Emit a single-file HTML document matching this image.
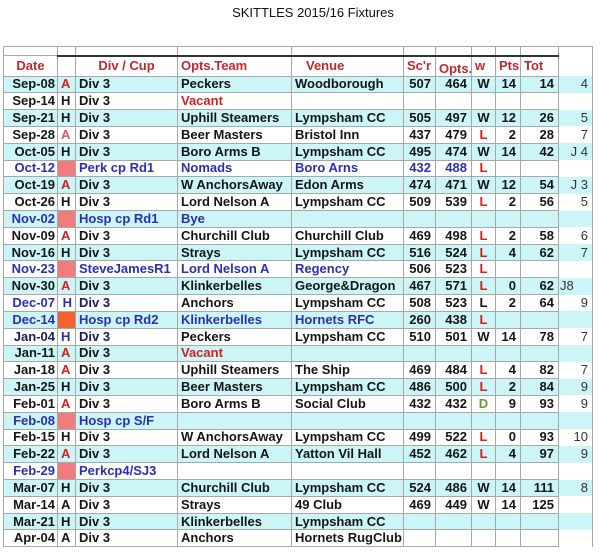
<!DOCTYPE html>
<html><head><meta charset="utf-8"><style>
html,body{margin:0;padding:0;background:#fff;width:600px;height:552px;overflow:hidden}
.t{position:absolute;left:0;top:5px;width:600px;text-align:center;font:13px "Liberation Sans",sans-serif;color:#111;padding-left:26px;box-sizing:border-box}
table{position:absolute;left:3px;top:46px;width:589px;border-collapse:collapse;table-layout:fixed;font:bold 13px "Liberation Sans",Arial,sans-serif;color:#151515}
td{border:1px solid #a8a8a8;padding:0 3px;line-height:14px;white-space:nowrap;overflow:hidden;box-sizing:border-box}
tr{height:16.82px}
tr.h{height:17px}
tr.h td{color:#c0282d;font-size:13px;border-top:2px solid #333}
tr.h td.e{border-top:none}
tr.z{height:9px}
tr.z td{border-bottom:none}
tr.c td{background:#ccf5f7}
td.e{border-left:none;border-top:none;border-bottom:none;border-right:1px solid #a8a8a8;font-weight:normal;text-align:right;color:#333;padding-right:4px}
td.d{text-align:right;padding-right:2px}
td.n{text-align:right;padding-right:4px}
td.w{text-align:center}
.r{color:#d62020}.b{color:#2a2fb5}.g{color:#6b9a3a}.p{color:#d95a6a}
td.pk{background:#f27c7c!important}td.or{background:#f4622f!important}
</style></head><body>
<div class="t">SKITTLES 2015/16 Fixtures</div>
<table>
<colgroup><col style="width:54px"><col style="width:18px"><col style="width:102px"><col style="width:114px"><col style="width:112px"><col style="width:32px"><col style="width:36px"><col style="width:24px"><col style="width:25px"><col style="width:38px"><col style="width:34px"></colgroup>
<tr class="z"><td style="border-bottom:1px solid #a8a8a8"></td><td></td><td></td><td></td><td></td><td></td><td></td><td></td><td></td><td></td><td class="e" style="border-top:1px solid #a8a8a8"></td></tr>
<tr class="h"><td style="border-top:1px solid #a8a8a8;text-align:center">Date</td><td></td><td style="text-align:center">Div / Cup</td><td>Opts.Team</td><td style="padding-left:14px">Venue</td><td>Sc'r</td><td style="padding-top:5px">Opts.</td><td>w</td><td>Pts.</td><td>Tot</td><td class="e"></td></tr>
<tr class="c"><td class="d">Sep-08</td><td class="r">A</td><td>Div 3</td><td>Peckers</td><td>Woodborough</td><td class="n">507</td><td class="n">464</td><td class="w">W</td><td class="n">14</td><td class="n">14</td><td class="e">4</td></tr>
<tr><td class="d">Sep-14</td><td>H</td><td>Div 3</td><td class="r">Vacant</td><td></td><td></td><td></td><td></td><td></td><td></td><td class="e"></td></tr>
<tr class="c"><td class="d">Sep-21</td><td>H</td><td>Div 3</td><td>Uphill Steamers</td><td>Lympsham CC</td><td class="n">505</td><td class="n">497</td><td class="w">W</td><td class="n">12</td><td class="n">26</td><td class="e">5</td></tr>
<tr><td class="d">Sep-28</td><td class="p">A</td><td>Div 3</td><td>Beer Masters</td><td>Bristol Inn</td><td class="n">437</td><td class="n">479</td><td class="w r">L</td><td class="n">2</td><td class="n">28</td><td class="e">7</td></tr>
<tr class="c"><td class="d">Oct-05</td><td>H</td><td>Div 3</td><td>Boro Arms B</td><td>Lympsham CC</td><td class="n">495</td><td class="n">474</td><td class="w">W</td><td class="n">14</td><td class="n">42</td><td class="e">J 4</td></tr>
<tr><td class="d b">Oct-12</td><td class="pk"></td><td class="b">Perk cp Rd1</td><td class="b">Nomads</td><td class="b">Boro Arns</td><td class="n b">432</td><td class="n b">488</td><td class="w r">L</td><td></td><td></td><td class="e"></td></tr>
<tr class="c"><td class="d">Oct-19</td><td class="r">A</td><td>Div 3</td><td>W AnchorsAway</td><td>Edon Arms</td><td class="n">474</td><td class="n">471</td><td class="w">W</td><td class="n">12</td><td class="n">54</td><td class="e">J 3</td></tr>
<tr><td class="d">Oct-26</td><td>H</td><td>Div 3</td><td>Lord Nelson A</td><td>Lympsham CC</td><td class="n">509</td><td class="n">539</td><td class="w r">L</td><td class="n">2</td><td class="n">56</td><td class="e">5</td></tr>
<tr class="c"><td class="d b">Nov-02</td><td class="pk"></td><td class="b">Hosp cp Rd1</td><td class="b">Bye</td><td></td><td></td><td></td><td></td><td></td><td></td><td class="e"></td></tr>
<tr><td class="d">Nov-09</td><td class="r">A</td><td>Div 3</td><td>Churchill Club</td><td>Churchill Club</td><td class="n">469</td><td class="n">498</td><td class="w r">L</td><td class="n">2</td><td class="n">58</td><td class="e">6</td></tr>
<tr class="c"><td class="d">Nov-16</td><td>H</td><td>Div 3</td><td>Strays</td><td>Lympsham CC</td><td class="n">516</td><td class="n">524</td><td class="w r">L</td><td class="n">4</td><td class="n">62</td><td class="e">7</td></tr>
<tr><td class="d b">Nov-23</td><td class="pk"></td><td class="b">SteveJamesR1</td><td class="b">Lord Nelson A</td><td class="b">Regency</td><td class="n">506</td><td class="n">523</td><td class="w r">L</td><td></td><td></td><td class="e"></td></tr>
<tr class="c"><td class="d">Nov-30</td><td class="r">A</td><td>Div 3</td><td>Klinkerbelles</td><td>George&amp;Dragon</td><td class="n">467</td><td class="n">571</td><td class="w r">L</td><td class="n">0</td><td class="n">62</td><td class="e" style="text-align:left;padding-left:1px">J8</td></tr>
<tr><td class="d b">Dec-07</td><td style="text-align:right" class="b">H</td><td style="color:#1a1a60">Div 3</td><td>Anchors</td><td>Lympsham CC</td><td class="n">508</td><td class="n">523</td><td class="w">L</td><td class="n">2</td><td class="n">64</td><td class="e">9</td></tr>
<tr class="c"><td class="d b">Dec-14</td><td class="or"></td><td class="b">Hosp cp Rd2</td><td class="b">Klinkerbelles</td><td class="b">Hornets RFC</td><td class="n">260</td><td class="n">438</td><td class="w r">L</td><td></td><td></td><td class="e"></td></tr>
<tr><td class="d" style="color:#1a1a60">Jan-04</td><td class="b">H</td><td style="color:#1a1a60">Div 3</td><td>Peckers</td><td>Lympsham CC</td><td class="n">510</td><td class="n">501</td><td class="w">W</td><td class="n">14</td><td class="n">78</td><td class="e">7</td></tr>
<tr class="c"><td class="d">Jan-11</td><td class="r">A</td><td>Div 3</td><td class="r">Vacant</td><td></td><td></td><td></td><td></td><td></td><td></td><td class="e"></td></tr>
<tr><td class="d">Jan-18</td><td class="r">A</td><td>Div 3</td><td>Uphill Steamers</td><td>The Ship</td><td class="n">469</td><td class="n">484</td><td class="w r">L</td><td class="n">4</td><td class="n">82</td><td class="e">7</td></tr>
<tr class="c"><td class="d">Jan-25</td><td>H</td><td>Div 3</td><td>Beer Masters</td><td>Lympsham CC</td><td class="n">486</td><td class="n">500</td><td class="w r">L</td><td class="n">2</td><td class="n">84</td><td class="e">9</td></tr>
<tr><td class="d">Feb-01</td><td class="r">A</td><td>Div 3</td><td>Boro Arms B</td><td>Social Club</td><td class="n">432</td><td class="n">432</td><td class="w g">D</td><td class="n">9</td><td class="n">93</td><td class="e">9</td></tr>
<tr class="c"><td class="d b">Feb-08</td><td class="pk"></td><td class="b">Hosp cp S/F</td><td></td><td></td><td></td><td></td><td></td><td></td><td></td><td class="e"></td></tr>
<tr><td class="d">Feb-15</td><td>H</td><td>Div 3</td><td>W AnchorsAway</td><td>Lympsham CC</td><td class="n">499</td><td class="n">522</td><td class="w r">L</td><td class="n">0</td><td class="n">93</td><td class="e">10</td></tr>
<tr class="c"><td class="d">Feb-22</td><td class="r">A</td><td>Div 3</td><td>Lord Nelson A</td><td>Yatton Vil Hall</td><td class="n">452</td><td class="n">462</td><td class="w r">L</td><td class="n">4</td><td class="n">97</td><td class="e">9</td></tr>
<tr><td class="d b">Feb-29</td><td class="pk"></td><td class="b">Perkcp4/SJ3</td><td></td><td></td><td></td><td></td><td></td><td></td><td></td><td class="e"></td></tr>
<tr class="c"><td class="d">Mar-07</td><td>H</td><td>Div 3</td><td>Churchill Club</td><td>Lympsham CC</td><td class="n">524</td><td class="n">486</td><td class="w">W</td><td class="n">14</td><td class="n">111</td><td class="e">8</td></tr>
<tr><td class="d">Mar-14</td><td>A</td><td>Div 3</td><td>Strays</td><td>49 Club</td><td class="n">469</td><td class="n">449</td><td class="w">W</td><td class="n">14</td><td class="n">125</td><td class="e"></td></tr>
<tr class="c"><td class="d">Mar-21</td><td>H</td><td>Div 3</td><td>Klinkerbelles</td><td>Lympsham CC</td><td></td><td></td><td></td><td></td><td></td><td class="e"></td></tr>
<tr><td class="d">Apr-04</td><td>A</td><td>Div 3</td><td>Anchors</td><td>Hornets RugClub</td><td></td><td></td><td></td><td></td><td></td><td class="e"></td></tr>
</table>
</body></html>
